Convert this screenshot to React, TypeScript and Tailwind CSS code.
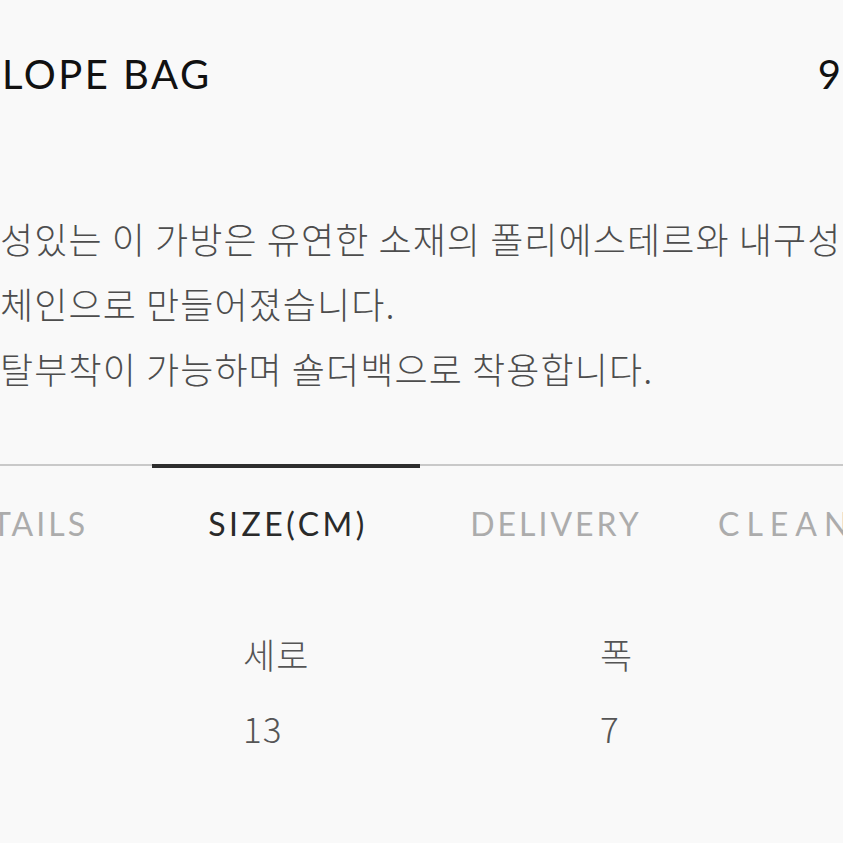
import React from "react";

const latin = { fontFamily: "Lato, 'Noto Sans', sans-serif" };
const kr = { fontFamily: "'Noto Sans CJK KR', 'Noto Sans', sans-serif" };

export default function App() {
  const tabs = [
    { label: "DETAILS", cls: "text-right pr-[64px] border-t-2 border-[#c9c9c9] pt-[38px] pb-[2px] text-[#acacac] tracking-[3px]" },
    { label: "SIZE(CM)", cls: "text-center pl-[4px] border-t-4 border-[#2e2e2e] pt-[36px] text-[#2a2a2a] tracking-[3.5px]" },
    { label: "DELIVERY", cls: "text-center pl-[4px] border-t-2 border-[#c9c9c9] pt-[38px] pb-[2px] text-[#acacac] tracking-[3px]" },
    { label: "CLEANING", cls: "text-left pl-[30px] border-t-2 border-[#c9c9c9] pt-[38px] pb-[2px] text-[#acacac] tracking-[7px]" },
  ];
  return (
    <div className="w-[843px] h-[843px] overflow-hidden bg-[#f9f9f9]">
      <div className="flex justify-between items-start pt-[50px] h-[206px]">
        <div
          className="text-[40px] leading-[48px] text-[#111] tracking-[2.5px] pl-[2px] whitespace-nowrap"
          style={latin}
        >
          LOPE BAG
        </div>
        <div className="text-[40px] leading-[48px] text-[#111] pr-[2px]" style={latin}>
          9
        </div>
      </div>

      <p
        className="text-[36px] leading-[65px] tracking-[1.1px] text-[#4d4d4d] font-light whitespace-nowrap h-[258px]"
        style={kr}
      >
        성있는 이 가방은 유연한 소재의 폴리에스테르와 내구성
        <br />
        체인으로 만들어졌습니다.
        <br />
        탈부착이 가능하며 숄더백으로 착용합니다.
      </p>

      <div className="flex ml-[-116px]">
        {tabs.map((t) => (
          <div
            key={t.label}
            className={"w-[268px] shrink-0 text-[32px] leading-[40px] whitespace-nowrap " + t.cls}
            style={latin}
          >
            {t.label}
          </div>
        ))}
      </div>

      <div
        className="grid grid-cols-[357px_357px_357px] ml-[-114px] mt-[71px] text-[35px] tracking-[1px] text-[#555] font-light"
        style={kr}
      >
        <div className="leading-[74px]">가로</div>
        <div className="leading-[74px]">세로</div>
        <div className="leading-[74px]">폭</div>
        <div className="leading-[74px]">20</div>
        <div className="leading-[74px]">13</div>
        <div className="leading-[74px]">7</div>
      </div>
    </div>
  );
}
